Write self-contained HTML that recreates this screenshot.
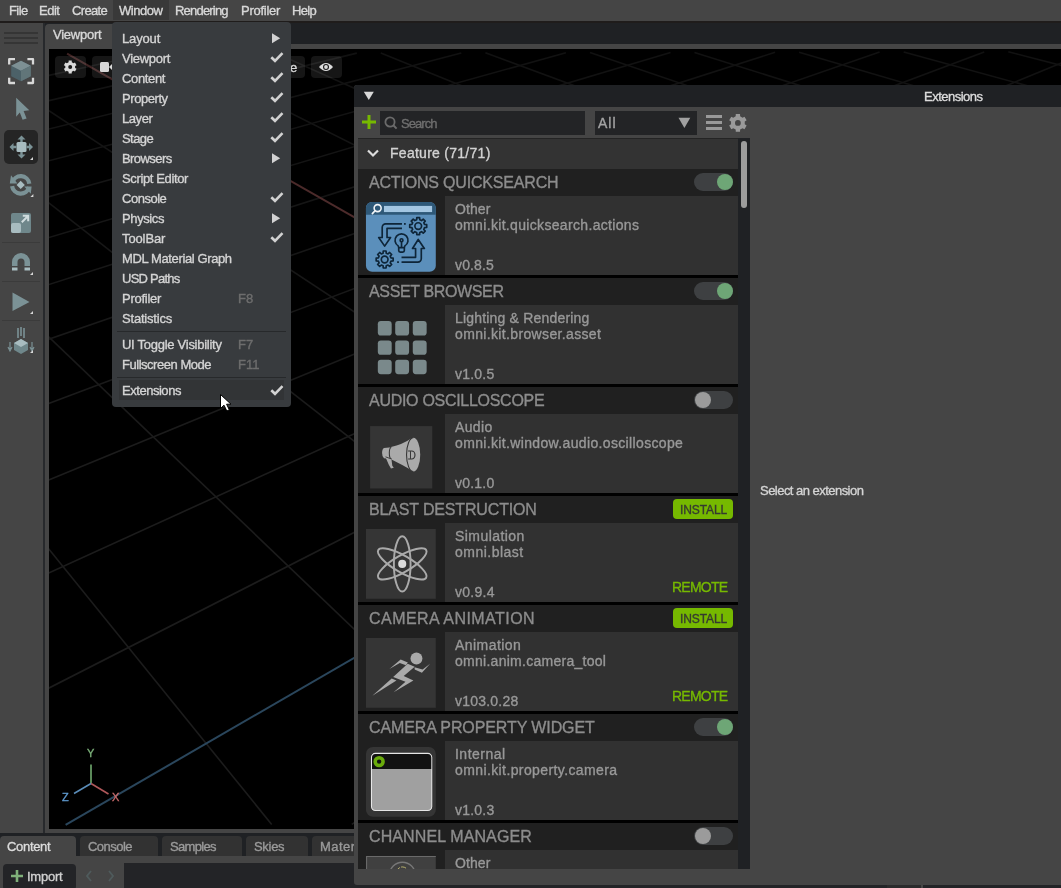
<!DOCTYPE html>
<html><head><meta charset="utf-8"><style>
*{box-sizing:border-box;margin:0;padding:0}
html,body{width:1061px;height:888px;overflow:hidden;background:#454545;font-family:"Liberation Sans",sans-serif;position:relative}
.a{position:absolute}
.t{position:absolute;white-space:pre;line-height:1;will-change:transform;-webkit-text-stroke:0.35px currentColor}
svg{display:block}
</style></head><body>
<div class="a" style="left:0px;top:0px;width:1061px;height:21px;background:#454545;"></div>
<div class="a" style="left:113px;top:0px;width:56px;height:20px;background:#393939;"></div>
<div class="a" style="left:0px;top:21px;width:1061px;height:2px;background:#1f1c1b;"></div>
<div class="t" style="left:8.5px;top:4.00px;font-size:13px;color:#d8d8d8;letter-spacing:-0.584px;">File</div>
<div class="t" style="left:39px;top:4.00px;font-size:13px;color:#d8d8d8;letter-spacing:-0.502px;">Edit</div>
<div class="t" style="left:72px;top:4.00px;font-size:13px;color:#d8d8d8;letter-spacing:-0.666px;">Create</div>
<div class="t" style="left:119px;top:4.00px;font-size:13px;color:#d8d8d8;letter-spacing:-0.490px;">Window</div>
<div class="t" style="left:175px;top:4.00px;font-size:13px;color:#d8d8d8;letter-spacing:-0.800px;">Rendering</div>
<div class="t" style="left:241px;top:4.00px;font-size:13px;color:#d8d8d8;letter-spacing:-0.270px;">Profiler</div>
<div class="t" style="left:292px;top:4.00px;font-size:13px;color:#d8d8d8;letter-spacing:-0.683px;">Help</div>
<div class="a" style="left:0px;top:23px;width:43px;height:810px;background:#454545;"></div>
<div class="a" style="left:43px;top:23px;width:2px;height:813px;background:#27292c;"></div>
<div class="a" style="left:4px;top:32px;width:34px;height:2px;background:#353535;"></div>
<div class="a" style="left:4px;top:37px;width:34px;height:2px;background:#353535;"></div>
<div class="a" style="left:4px;top:42px;width:34px;height:2px;background:#353535;"></div>
<svg class="a" style="left:0;top:50px" width="43" height="40" viewBox="0 50 43 40">
<path d="M9.2 64.5V59.2H15 M27.4 59.2H33V64.5 M33 77.8V83H27.4 M15 83H9.2V77.8" fill="none" stroke="#d8d8d8" stroke-width="2.3" stroke-linejoin="round"/>
<path d="M21 60.8L30.8 65.8V76.2L21 81.3L11.2 76.2V65.8Z" fill="#4c6168"/>
<path d="M21 60.8L30.8 65.8L21 70.8L11.2 65.8Z" fill="#7d9094"/>
<path d="M21 70.8L30.8 65.8V76.2L21 81.3Z" fill="#617579"/>
</svg>
<svg class="a" style="left:0;top:90px" width="43" height="40" viewBox="0 90 43 40">
<path d="M16.2 97.7L29.3 110.3L23.6 111L26.6 118.6L22.6 119.8L19.8 112.6L16.2 116.8Z" fill="#7b9296"/></svg>
<div class="a" style="left:4px;top:130px;width:34px;height:34px;background:#252525;border-radius:5px"></div>
<svg class="a" style="left:0;top:128px" width="43" height="40" viewBox="0 128 43 40">
<rect x="16.5" y="142" width="10" height="10" rx="1.5" fill="#a8bcc0"/>
<path d="M21.5 135.5L25.5 139.5H17.5Z M21.5 158.5L25.5 154.5H17.5Z M9.5 147L13.5 143V151Z M33 147L29 143V151Z" fill="#7b9296"/>
<path d="M20.3 139H22.7V142H20.3Z M20.3 152H22.7V155H20.3Z M13 145.8H16.5V148.2H13Z M26.5 145.8H29.5V148.2H26.5Z" fill="#7b9296"/>
<path d="M33 157L33 160L30 160Z" fill="#d8d8d8"/></svg>
<svg class="a" style="left:0;top:168px" width="43" height="34" viewBox="0 168 43 34">
<path d="M29.32 183.69A8.7 8.7 0 0 0 12.30 182.65" fill="none" stroke="#7b9296" stroke-width="4.2"/>
<path d="M12.09 186.11A8.7 8.7 0 0 0 29.1 187.15" fill="none" stroke="#7b9296" stroke-width="4.2"/>
<path d="M9.8 183.4H17.4L11 175.2Z M24.2 186.4H31.6L30.8 193.8Z" fill="#7b9296"/>
<path d="M20.7 180.8L24.8 184.9L20.7 189L16.6 184.9Z" fill="#a8bcc0"/>
<path d="M33.4 194L33.4 197L30.4 197Z" fill="#d8d8d8"/></svg>
<svg class="a" style="left:0;top:208px" width="43" height="30" viewBox="0 208 43 30">
<rect x="11" y="213" width="20" height="20" rx="2" fill="#6f878b"/>
<rect x="11" y="223" width="10" height="10" rx="2" fill="#a8bcc0"/>
<path d="M21.8 222.2L28 216 M22.8 215.8H28.2V221.2" fill="none" stroke="#d0dcde" stroke-width="2"/></svg>
<div class="a" style="left:2px;top:242px;width:38px;height:1px;background:#3b3b3b;"></div>
<div class="a" style="left:2px;top:281px;width:38px;height:1px;background:#3b3b3b;"></div>
<div class="a" style="left:2px;top:320px;width:38px;height:1px;background:#3b3b3b;"></div>
<svg class="a" style="left:0;top:248px" width="43" height="30" viewBox="0 248 43 30">
<path d="M12 266V262A9 9 0 0 1 30 262V266H24.5V262A3.5 3.5 0 0 0 17.5 262V266Z" fill="#7b9296"/>
<rect x="12" y="267.5" width="5.5" height="3" fill="#a8bcc0"/><rect x="24.5" y="267.5" width="5.5" height="3" fill="#a8bcc0"/>
<path d="M33 272L33 275L30 275Z" fill="#d8d8d8"/></svg>
<svg class="a" style="left:0;top:288px" width="43" height="30" viewBox="0 288 43 30">
<path d="M12.5 292.5L29.5 302L12.5 311Z" fill="#7b9296"/>
<path d="M33 311L33 314L30 314Z" fill="#d8d8d8"/></svg>
<svg class="a" style="left:0;top:325px" width="43" height="32" viewBox="0 325 43 32">
<path d="M18 328V338 M21 327V336 M24 328V338" stroke="#7b9296" stroke-width="1.6"/>
<path d="M21 339L28 343V350L21 354L14 350V343Z" fill="#6f878b"/>
<path d="M21 339L28 343L21 347L14 343Z" fill="#a8bcc0"/>
<path d="M10 342V349 M8 347L10 351L12 347 M32 342V349 M30 347L32 351L34 347" fill="none" stroke="#7b9296" stroke-width="1.2"/>
<path d="M33 350L33 353L30 353Z" fill="#d8d8d8"/></svg>
<div class="a" style="left:45px;top:23px;width:1016px;height:21px;background:#1f2124;"></div>
<div class="a" style="left:45px;top:24px;width:235px;height:21px;background:#454545;border-radius:4px 4px 0 0"></div>
<div class="t" style="left:53px;top:27.90px;font-size:13px;color:#d8d8d8;letter-spacing:-0.249px;">Viewport</div>
<div class="a" style="left:45px;top:44px;width:1016px;height:789px;background:#454545;"></div>
<div class="a" style="left:49px;top:49px;width:1012px;height:780px;background:#000;"></div>
<svg class="a" style="left:49px;top:49px" width="1012" height="780" viewBox="49 49 1012 780">
<defs><linearGradient id="gf" x1="0" y1="49" x2="0" y2="450" gradientUnits="userSpaceOnUse"><stop offset="0" stop-color="#fff" stop-opacity="0.62"/><stop offset="1" stop-color="#fff" stop-opacity="1"/></linearGradient>
<mask id="gm" maskUnits="userSpaceOnUse" x="49" y="49" width="1012" height="780"><rect x="49" y="49" width="1012" height="780" fill="url(#gf)"/></mask></defs>
<g mask="url(#gm)"><g stroke="#1c1c1c" stroke-width="1.6"><line x1="8650.4" y1="808.5" x2="4539.9" y2="45.1"/><line x1="8364.3" y1="809.1" x2="4435.3" y2="45.3"/><line x1="8078.1" y1="809.6" x2="4330.7" y2="45.5"/><line x1="7791.9" y1="810.2" x2="4226.1" y2="45.7"/><line x1="7505.8" y1="810.7" x2="4121.5" y2="45.9"/><line x1="7219.6" y1="811.2" x2="4017.0" y2="46.1"/><line x1="6933.5" y1="811.8" x2="3912.4" y2="46.3"/><line x1="6647.3" y1="812.3" x2="3807.8" y2="46.5"/><line x1="6361.1" y1="812.9" x2="3703.2" y2="46.7"/><line x1="6075.0" y1="813.4" x2="3598.7" y2="46.9"/><line x1="5788.8" y1="814.0" x2="3494.1" y2="47.1"/><line x1="5502.7" y1="814.5" x2="3389.5" y2="47.3"/><line x1="5216.5" y1="815.1" x2="3284.9" y2="47.5"/><line x1="4930.3" y1="815.6" x2="3180.3" y2="47.7"/><line x1="4644.2" y1="816.2" x2="3075.8" y2="47.9"/><line x1="4358.0" y1="816.7" x2="2971.2" y2="48.1"/><line x1="4071.9" y1="817.2" x2="2866.6" y2="48.3"/><line x1="3785.7" y1="817.8" x2="2762.0" y2="48.5"/><line x1="3499.5" y1="818.3" x2="2657.5" y2="48.7"/><line x1="3213.4" y1="818.9" x2="2552.9" y2="48.9"/><line x1="2927.2" y1="819.4" x2="2448.3" y2="49.1"/><line x1="2641.1" y1="820.0" x2="2343.7" y2="49.3"/><line x1="2354.9" y1="820.5" x2="2239.1" y2="49.5"/><line x1="2068.7" y1="821.1" x2="2134.6" y2="49.7"/><line x1="1782.6" y1="821.6" x2="2030.0" y2="49.9"/><line x1="1496.4" y1="822.2" x2="1925.4" y2="50.1"/><line x1="1210.3" y1="822.7" x2="1820.8" y2="50.3"/><line x1="924.1" y1="823.3" x2="1716.3" y2="50.5"/><line x1="637.9" y1="823.8" x2="1611.7" y2="50.7"/><line x1="351.8" y1="824.3" x2="1507.1" y2="50.9"/><line x1="-220.5" y1="825.4" x2="1298.0" y2="51.3"/><line x1="-506.7" y1="826.0" x2="1193.4" y2="51.5"/><line x1="-792.9" y1="826.5" x2="1088.8" y2="51.7"/><line x1="-1079.0" y1="827.1" x2="984.2" y2="51.9"/><line x1="-1365.2" y1="827.6" x2="879.6" y2="52.1"/><line x1="-1651.3" y1="828.2" x2="775.1" y2="52.3"/><line x1="-1937.5" y1="828.7" x2="670.5" y2="52.5"/><line x1="-2223.7" y1="829.3" x2="565.9" y2="52.7"/><line x1="-2509.8" y1="829.8" x2="461.3" y2="52.9"/><line x1="-2796.0" y1="830.4" x2="356.8" y2="53.1"/><line x1="-3082.1" y1="830.9" x2="252.2" y2="53.3"/><line x1="-3368.3" y1="831.4" x2="147.6" y2="53.5"/><line x1="-3654.5" y1="832.0" x2="43.0" y2="53.7"/><line x1="-3940.6" y1="832.5" x2="-61.6" y2="53.9"/><line x1="-4226.8" y1="833.1" x2="-166.1" y2="54.1"/><line x1="-4512.9" y1="833.6" x2="-270.7" y2="54.3"/><line x1="-4799.1" y1="834.2" x2="-375.3" y2="54.5"/><line x1="-5085.3" y1="834.7" x2="-479.9" y2="54.7"/><line x1="-5371.4" y1="835.3" x2="-584.4" y2="54.9"/><line x1="-5657.6" y1="835.8" x2="-689.0" y2="55.1"/><line x1="-5943.7" y1="836.4" x2="-793.6" y2="55.3"/><line x1="-6229.9" y1="836.9" x2="-898.2" y2="55.5"/><line x1="-6516.1" y1="837.5" x2="-1002.8" y2="55.7"/><line x1="-6802.2" y1="838.0" x2="-1107.3" y2="55.9"/><line x1="-7088.4" y1="838.5" x2="-1211.9" y2="56.1"/><line x1="-7374.5" y1="839.1" x2="-1316.5" y2="56.3"/><line x1="-7660.7" y1="839.6" x2="-1421.1" y2="56.5"/><line x1="-7946.9" y1="840.2" x2="-1525.6" y2="56.7"/><line x1="-8233.0" y1="840.7" x2="-1630.2" y2="56.9"/><line x1="-8519.2" y1="841.3" x2="-1734.8" y2="57.1"/><line x1="-7168.5" y1="838.7" x2="-3070.3" y2="59.6"/><line x1="-6882.3" y1="838.2" x2="-2965.7" y2="59.4"/><line x1="-6596.2" y1="837.6" x2="-2861.1" y2="59.2"/><line x1="-6310.0" y1="837.1" x2="-2756.5" y2="59.0"/><line x1="-6023.9" y1="836.5" x2="-2651.9" y2="58.8"/><line x1="-5737.7" y1="836.0" x2="-2547.4" y2="58.6"/><line x1="-5451.5" y1="835.4" x2="-2442.8" y2="58.4"/><line x1="-5165.4" y1="834.9" x2="-2338.2" y2="58.2"/><line x1="-4879.2" y1="834.3" x2="-2233.6" y2="58.0"/><line x1="-4593.1" y1="833.8" x2="-2129.1" y2="57.8"/><line x1="-4306.9" y1="833.2" x2="-2024.5" y2="57.6"/><line x1="-4020.7" y1="832.7" x2="-1919.9" y2="57.4"/><line x1="-3734.6" y1="832.1" x2="-1815.3" y2="57.2"/><line x1="-3448.4" y1="831.6" x2="-1710.7" y2="57.0"/><line x1="-3162.3" y1="831.1" x2="-1606.2" y2="56.8"/><line x1="-2876.1" y1="830.5" x2="-1501.6" y2="56.6"/><line x1="-2589.9" y1="830.0" x2="-1397.0" y2="56.4"/><line x1="-2303.8" y1="829.4" x2="-1292.4" y2="56.2"/><line x1="-2017.6" y1="828.9" x2="-1187.9" y2="56.0"/><line x1="-1731.5" y1="828.3" x2="-1083.3" y2="55.8"/><line x1="-1445.3" y1="827.8" x2="-978.7" y2="55.6"/><line x1="-1159.1" y1="827.2" x2="-874.1" y2="55.4"/><line x1="-873.0" y1="826.7" x2="-769.5" y2="55.2"/><line x1="-586.8" y1="826.1" x2="-665.0" y2="55.0"/><line x1="-300.7" y1="825.6" x2="-560.4" y2="54.8"/><line x1="-14.5" y1="825.0" x2="-455.8" y2="54.6"/><line x1="271.7" y1="824.5" x2="-351.2" y2="54.4"/><line x1="557.8" y1="824.0" x2="-246.7" y2="54.2"/><line x1="844.0" y1="823.4" x2="-142.1" y2="54.0"/><line x1="1130.1" y1="822.9" x2="-37.5" y2="53.8"/><line x1="1702.4" y1="821.8" x2="171.7" y2="53.4"/><line x1="1988.6" y1="821.2" x2="276.2" y2="53.2"/><line x1="2274.8" y1="820.7" x2="380.8" y2="53.0"/><line x1="2560.9" y1="820.1" x2="485.4" y2="52.8"/><line x1="2847.1" y1="819.6" x2="590.0" y2="52.6"/><line x1="3133.2" y1="819.0" x2="694.5" y2="52.4"/><line x1="3419.4" y1="818.5" x2="799.1" y2="52.2"/><line x1="3705.6" y1="817.9" x2="903.7" y2="52.0"/><line x1="3991.7" y1="817.4" x2="1008.3" y2="51.8"/><line x1="4277.9" y1="816.9" x2="1112.8" y2="51.6"/><line x1="4564.0" y1="816.3" x2="1217.4" y2="51.4"/><line x1="4850.2" y1="815.8" x2="1322.0" y2="51.2"/><line x1="5136.4" y1="815.2" x2="1426.6" y2="51.0"/><line x1="5422.5" y1="814.7" x2="1531.2" y2="50.8"/><line x1="5708.7" y1="814.1" x2="1635.7" y2="50.6"/><line x1="5994.8" y1="813.6" x2="1740.3" y2="50.4"/><line x1="6281.0" y1="813.0" x2="1844.9" y2="50.2"/><line x1="6567.2" y1="812.5" x2="1949.5" y2="50.0"/><line x1="6853.3" y1="811.9" x2="2054.0" y2="49.8"/><line x1="7139.5" y1="811.4" x2="2158.6" y2="49.6"/><line x1="7425.6" y1="810.8" x2="2263.2" y2="49.4"/><line x1="7711.8" y1="810.3" x2="2367.8" y2="49.2"/><line x1="7998.0" y1="809.8" x2="2472.4" y2="49.0"/><line x1="8284.1" y1="809.2" x2="2576.9" y2="48.9"/><line x1="8570.3" y1="808.7" x2="2681.5" y2="48.7"/><line x1="8856.4" y1="808.1" x2="2786.1" y2="48.5"/><line x1="9142.6" y1="807.6" x2="2890.7" y2="48.3"/><line x1="9428.8" y1="807.0" x2="2995.2" y2="48.1"/><line x1="9714.9" y1="806.5" x2="3099.8" y2="47.9"/><line x1="10001.1" y1="805.9" x2="3204.4" y2="47.7"/></g><line x1="65.6" y1="824.9" x2="1402.5" y2="51.1" stroke="#2a465c" stroke-width="2"/><line x1="1416.3" y1="822.3" x2="67.1" y2="53.6" stroke="#643838" stroke-width="2"/></g></svg>
<div class="a" style="left:55px;top:56px;width:31px;height:22px;background:rgba(255,255,255,0.085);border-radius:4px"></div>
<svg class="a" style="left:60px;top:57px" width="20" height="20" viewBox="60 57 20 20"><path d="M68.61 62.26 L68.66 60.58 L71.74 60.58 L71.79 62.26 L73.51 63.25 L74.99 62.46 L76.53 65.13 L75.10 66.01 L75.10 67.99 L76.53 68.87 L74.99 71.54 L73.51 70.75 L71.79 71.74 L71.74 73.42 L68.66 73.42 L68.61 71.74 L66.89 70.75 L65.41 71.54 L63.87 68.87 L65.30 67.99 L65.30 66.01 L63.87 65.13 L65.41 62.46 L66.89 63.25Z" fill="#dadada"/><circle cx="70.2" cy="67" r="2" fill="#1a1a1a"/></svg>
<div class="a" style="left:92px;top:56px;width:60px;height:22px;background:rgba(255,255,255,0.085);border-radius:4px"></div>
<svg class="a" style="left:100px;top:61px" width="14" height="12"><rect x="0" y="1" width="9" height="10" rx="1.5" fill="#d8d8d8"/><path d="M9 6L13 2V10Z" fill="#d8d8d8"/></svg>
<div class="a" style="left:230px;top:56px;width:75px;height:22px;background:rgba(255,255,255,0.085);border-radius:4px"></div>
<div class="t" style="left:290px;top:61.00px;font-size:13px;color:#d8d8d8;">e</div>
<div class="a" style="left:311px;top:56px;width:31px;height:22px;background:rgba(255,255,255,0.085);border-radius:4px"></div>
<svg class="a" style="left:318px;top:61px" width="16" height="12" viewBox="0 0 16 12">
<path d="M1 6Q8 -2 15 6Q8 14 1 6Z" fill="#dcdcdc"/><circle cx="8" cy="6" r="3" fill="#1a1a1a"/><circle cx="8" cy="6" r="1.9" fill="#dcdcdc"/></svg>
<svg class="a" style="left:55px;top:745px" width="70" height="60" viewBox="55 745 70 60">
<path d="M91 783.5V764.5" stroke="#72ac70" stroke-width="1.6"/>
<path d="M91 783.5L108.5 794" stroke="#b0585a" stroke-width="1.6"/>
<path d="M91 783.5L74 793.5" stroke="#5a8cb8" stroke-width="1.6"/>
</svg>
<div class="t" style="left:86.6px;top:748.49px;font-size:11px;color:#7aae78;">Y</div>
<div class="t" style="left:111.8px;top:792.49px;font-size:11px;color:#c86a6a;">X</div>
<div class="t" style="left:61.8px;top:792.49px;font-size:11px;color:#5f9ad0;">Z</div>
<div class="a" style="left:0px;top:833px;width:1061px;height:23px;background:#1f2124;"></div>
<div class="a" style="left:0px;top:836px;width:76px;height:20px;background:#454545;border-radius:4px 4px 0 0"></div>
<div class="t" style="left:7px;top:839.70px;font-size:13px;color:#dcdcdc;letter-spacing:-0.324px;">Content</div>
<div class="a" style="left:80px;top:836px;width:78px;height:20px;background:#323232;border-radius:4px 4px 0 0"></div>
<div class="t" style="left:88px;top:839.70px;font-size:13px;color:#9a9a9a;letter-spacing:-0.517px;">Console</div>
<div class="a" style="left:162px;top:836px;width:80px;height:20px;background:#323232;border-radius:4px 4px 0 0"></div>
<div class="t" style="left:170px;top:839.70px;font-size:13px;color:#9a9a9a;letter-spacing:-0.663px;">Samples</div>
<div class="a" style="left:246px;top:836px;width:62px;height:20px;background:#323232;border-radius:4px 4px 0 0"></div>
<div class="t" style="left:254px;top:839.70px;font-size:13px;color:#9a9a9a;letter-spacing:-0.299px;">Skies</div>
<div class="a" style="left:312px;top:836px;width:80px;height:20px;background:#323232;border-radius:4px 4px 0 0"></div>
<div class="t" style="left:320px;top:839.70px;font-size:13px;color:#9a9a9a;letter-spacing:0.481px;">Materials</div>
<div class="a" style="left:0px;top:856px;width:1061px;height:32px;background:#454545;"></div>
<div class="a" style="left:3px;top:864px;width:73px;height:26px;background:#232427;border-radius:4px"></div>
<svg class="a" style="left:10px;top:869px" width="14" height="14"><path d="M7 1V13M1 7H13" stroke="#7fb07a" stroke-width="2.6"/></svg>
<div class="t" style="left:27px;top:870.00px;font-size:13px;color:#d0d0d0;letter-spacing:-0.249px;">Import</div>
<svg class="a" style="left:84px;top:869px" width="40" height="14"><path d="M7 2L3 7L7 12 M25 2L29 7L25 12" fill="none" stroke="#4f5b5c" stroke-width="1.8"/></svg>
<div class="a" style="left:124px;top:863px;width:937px;height:26px;background:#232427;"></div>
<div class="a" style="left:887px;top:885px;width:34px;height:3px;background:#2b2b2c;"></div>
<div class="a" style="left:921px;top:885px;width:2px;height:3px;background:#474747;"></div>
<div class="a" style="left:354px;top:85px;width:707px;height:800px;background:#454545;border-radius:3px 0 0 3px"></div>
<div class="a" style="left:354px;top:85px;width:707px;height:22px;background:#1f2124;border-radius:3px 0 0 0"></div>
<svg class="a" style="left:363px;top:91px" width="12" height="10"><path d="M0.8 0.8H10.8L5.8 9Z" fill="#d8d8d8"/></svg>
<div class="t" style="left:924.3px;top:89.80px;font-size:13px;color:#dcdcdc;letter-spacing:-0.510px;">Extensions</div>
<svg class="a" style="left:361px;top:114px" width="16" height="16"><path d="M8 1V15M1 8H15" stroke="#76b900" stroke-width="3"/></svg>
<div class="a" style="left:380px;top:111px;width:205px;height:24px;background:#232426;"></div>
<svg class="a" style="left:383px;top:115px" width="16" height="16"><circle cx="7" cy="7" r="4.6" fill="none" stroke="#6a6a6a" stroke-width="1.8"/><path d="M10.3 10.3L13.6 13.6" stroke="#6a6a6a" stroke-width="2"/></svg>
<div class="t" style="left:401.4px;top:116.90px;font-size:13px;color:#6f6f6f;letter-spacing:-0.941px;">Search</div>
<div class="a" style="left:595px;top:111px;width:102px;height:24px;background:#232426;"></div>
<div class="t" style="left:598px;top:116.15px;font-size:14px;color:#a4a4a4;letter-spacing:1.019px;">All</div>
<svg class="a" style="left:678px;top:117px" width="13" height="12"><path d="M0.5 0.8H12.3L6.4 11Z" fill="#a0a0a0"/></svg>
<svg class="a" style="left:705px;top:114px" width="18" height="18"><path d="M1 2.5H17M1 8.5H17M1 14.5H17" stroke="#9a9a9a" stroke-width="3"/></svg>
<svg class="a" style="left:727px;top:112px" width="22" height="22" viewBox="727 112 22 22"><path d="M735.67 116.27 L735.78 114.05 L740.02 114.05 L740.13 116.27 L742.53 117.65 L744.50 116.64 L746.63 120.32 L744.76 121.52 L744.76 124.28 L746.63 125.48 L744.50 129.16 L742.53 128.15 L740.13 129.53 L740.02 131.75 L735.78 131.75 L735.67 129.53 L733.27 128.15 L731.30 129.16 L729.17 125.48 L731.04 124.28 L731.04 121.52 L729.17 120.32 L731.30 116.64 L733.27 117.65Z" fill="#9a9a9a"/><circle cx="737.9" cy="122.9" r="2.9" fill="#454545"/></svg>
<div class="a" style="left:358px;top:138px;width:392px;height:731px;background:#1f2124;"></div>
<div class="a" style="left:358px;top:138px;width:380px;height:31px;background:#333333;"></div>
<div class="a" style="left:358px;top:138px;width:380px;height:1px;background:#242424;"></div>
<svg class="a" style="left:366px;top:148px" width="14" height="11"><path d="M2 2.5L7 7.5L12 2.5" fill="none" stroke="#dcdcdc" stroke-width="2.2"/></svg>
<div class="t" style="left:389.6px;top:145.95px;font-size:14px;color:#d2d2d2;letter-spacing:0.271px;">Feature (71/71)</div>
<div class="a" style="left:741px;top:141px;width:6px;height:67px;background:#9c9c9c;border-radius:3px"></div>
<div class="t" style="left:760.1px;top:484.00px;font-size:13px;color:#d4d4d4;letter-spacing:-0.532px;">Select an extension</div>
<div class="a" style="left:0;top:0;width:1061px;height:869px;overflow:hidden">
<div class="a" style="left:358px;top:169px;width:380px;height:27px;background:#202020;"></div>
<div class="a" style="left:358px;top:196px;width:87px;height:79px;background:#202020;"></div>
<div class="a" style="left:445px;top:196px;width:293px;height:79px;background:#313131;"></div>
<div class="a" style="left:358px;top:275px;width:380px;height:3px;background:#000;"></div>
<svg class="a" style="left:362px;top:198px" width="78" height="78" viewBox="0 0 888 888"><rect x="45" y="45" width="795" height="795" rx="70" fill="#5b8fbb"/>
<path d="M45 190V115A70 70 0 0 1 115 45H770A70 70 0 0 1 840 115V190Z" fill="#2e5878"/>
<rect x="250" y="90" width="548" height="70" fill="#a3c6e2"/>
<circle cx="178" cy="115" r="40" fill="none" stroke="#f0f4f8" stroke-width="18"/>
<path d="M148 145L118 178" stroke="#f0f4f8" stroke-width="20" stroke-linecap="round"/>
<g fill="none" stroke="#0e2538" stroke-width="19" stroke-linejoin="round">
<path d="M455 295H270A40 40 0 0 0 230 335V450H190L258 548L325 450H285V345H455"/>
<path d="M450 675H610V575H575L640 472L710 575H675V690A40 40 0 0 1 635 730H450"/>
<path d="M412 545A74 74 0 1 1 488 545L482 565H418Z"/>
<path d="M418 565V598A18 18 0 0 0 436 616H464A18 18 0 0 0 482 598V565"/>
<circle cx="450" cy="480" r="16"/>
<path d="M450 496V565"/>
<path d="M711.82 302.16 L736.67 303.91 L736.67 336.09 L711.82 337.84 L703.40 358.17 L719.73 376.98 L696.98 399.73 L678.17 383.40 L657.84 391.82 L656.09 416.67 L623.91 416.67 L622.16 391.82 L601.83 383.40 L583.02 399.73 L560.27 376.98 L576.60 358.17 L568.18 337.84 L543.33 336.09 L543.33 303.91 L568.18 302.16 L576.60 281.83 L560.27 263.02 L583.02 240.27 L601.83 256.60 L622.16 248.18 L623.91 223.33 L656.09 223.33 L657.84 248.18 L678.17 256.60 L696.98 240.27 L719.73 263.02 L703.40 281.83Z"/><circle cx="640" cy="320" r="38"/>
<path d="M329.82 682.16 L354.67 683.91 L354.67 716.09 L329.82 717.84 L321.40 738.17 L337.73 756.98 L314.98 779.73 L296.17 763.40 L275.84 771.82 L274.09 796.67 L241.91 796.67 L240.16 771.82 L219.83 763.40 L201.02 779.73 L178.27 756.98 L194.60 738.17 L186.18 717.84 L161.33 716.09 L161.33 683.91 L186.18 682.16 L194.60 661.83 L178.27 643.02 L201.02 620.27 L219.83 636.60 L240.16 628.18 L241.91 603.33 L274.09 603.33 L275.84 628.18 L296.17 636.60 L314.98 620.27 L337.73 643.02 L321.40 661.83Z"/><circle cx="258" cy="700" r="38"/>
</g>
<g fill="#0e2538"><rect x="478" y="285" width="20" height="20"/><rect x="400" y="720" width="20" height="20"/></g></svg>
<div class="t" style="left:368.6px;top:174.96px;font-size:16px;color:#8c8c8c;letter-spacing:-0.185px;">ACTIONS QUICKSEARCH</div>
<div class="t" style="left:455.4px;top:202.05px;font-size:14px;color:#989898;letter-spacing:0.096px;">Other</div>
<div class="t" style="left:455.4px;top:218.05px;font-size:14px;color:#989898;letter-spacing:0.330px;">omni.kit.quicksearch.actions</div>
<div class="t" style="left:455.4px;top:257.65px;font-size:14px;color:#989898;letter-spacing:0.132px;">v0.8.5</div>
<div class="a" style="left:694px;top:173px;width:39px;height:18px;border-radius:9px;background:#3e4042"><div class="a" style="top:1px;left:22.5px;background:#6ea676;width:16px;height:16px;border-radius:8px"></div></div>
<div class="a" style="left:358px;top:278px;width:380px;height:27px;background:#202020;"></div>
<div class="a" style="left:358px;top:305px;width:87px;height:79px;background:#202020;"></div>
<div class="a" style="left:445px;top:305px;width:293px;height:79px;background:#313131;"></div>
<div class="a" style="left:358px;top:384px;width:380px;height:3px;background:#000;"></div>
<svg class="a" style="left:362px;top:307px" width="78" height="78" viewBox="0 0 888 888"><rect x="180" y="160" width="158" height="165" rx="35" fill="#7a898b"/><rect x="180" y="380" width="158" height="165" rx="35" fill="#7a898b"/><rect x="180" y="600" width="158" height="165" rx="35" fill="#7a898b"/><rect x="378" y="160" width="158" height="165" rx="35" fill="#7a898b"/><rect x="378" y="380" width="158" height="165" rx="35" fill="#7a898b"/><rect x="378" y="600" width="158" height="165" rx="35" fill="#7a898b"/><rect x="578" y="160" width="158" height="165" rx="35" fill="#7a898b"/><rect x="578" y="380" width="158" height="165" rx="35" fill="#7a898b"/><rect x="578" y="600" width="158" height="165" rx="35" fill="#7a898b"/></svg>
<div class="t" style="left:368.6px;top:283.96px;font-size:16px;color:#8c8c8c;letter-spacing:-0.358px;">ASSET BROWSER</div>
<div class="t" style="left:455.4px;top:311.05px;font-size:14px;color:#989898;letter-spacing:0.186px;">Lighting &amp; Rendering</div>
<div class="t" style="left:455.4px;top:327.05px;font-size:14px;color:#989898;letter-spacing:0.352px;">omni.kit.browser.asset</div>
<div class="t" style="left:455.4px;top:366.65px;font-size:14px;color:#989898;letter-spacing:0.212px;">v1.0.5</div>
<div class="a" style="left:694px;top:282px;width:39px;height:18px;border-radius:9px;background:#3e4042"><div class="a" style="top:1px;left:22.5px;background:#6ea676;width:16px;height:16px;border-radius:8px"></div></div>
<div class="a" style="left:358px;top:387px;width:380px;height:27px;background:#202020;"></div>
<div class="a" style="left:358px;top:414px;width:87px;height:79px;background:#202020;"></div>
<div class="a" style="left:445px;top:414px;width:293px;height:79px;background:#313131;"></div>
<div class="a" style="left:358px;top:493px;width:380px;height:3px;background:#000;"></div>
<svg class="a" style="left:362px;top:416px" width="78" height="78" viewBox="0 0 888 888"><rect x="92" y="115" width="708" height="710" fill="#353535"/>
<path d="M330 352Q460 325 568 250L590 632Q460 555 330 492Z" fill="#aaa"/>
<ellipse cx="585" cy="440" rx="78" ry="192" fill="#aaa"/>
<path d="M585 248A78 192 0 0 0 585 632" fill="none" stroke="#333" stroke-width="12"/>
<path d="M340 355L250 365A30 60 0 0 0 250 480L340 490Z" fill="#aaa"/>
<path d="M333 355A25 68 0 0 0 333 490" fill="none" stroke="#333" stroke-width="12"/>
<path d="M268 470L335 490L345 565L362 590L330 598L305 555Z" fill="#aaa"/>
<path d="M268 465L338 490" stroke="#333" stroke-width="10"/>
<path d="M525 398H565A38 46 0 0 1 565 490H525" fill="none" stroke="#333" stroke-width="13"/><path d="M552 400V488" stroke="#333" stroke-width="11"/></svg>
<div class="t" style="left:368.6px;top:392.96px;font-size:16px;color:#8c8c8c;letter-spacing:-0.288px;">AUDIO OSCILLOSCOPE</div>
<div class="t" style="left:455.4px;top:420.05px;font-size:14px;color:#989898;letter-spacing:0.372px;">Audio</div>
<div class="t" style="left:455.4px;top:436.05px;font-size:14px;color:#989898;letter-spacing:0.350px;">omni.kit.window.audio.oscilloscope</div>
<div class="t" style="left:455.4px;top:475.65px;font-size:14px;color:#989898;letter-spacing:0.212px;">v0.1.0</div>
<div class="a" style="left:694px;top:391px;width:39px;height:18px;border-radius:9px;background:#3e4042"><div class="a" style="top:1px;left:0.5px;background:#9b9b9b;width:16px;height:16px;border-radius:8px"></div></div>
<div class="a" style="left:358px;top:496px;width:380px;height:27px;background:#202020;"></div>
<div class="a" style="left:358px;top:523px;width:87px;height:79px;background:#202020;"></div>
<div class="a" style="left:445px;top:523px;width:293px;height:79px;background:#313131;"></div>
<div class="a" style="left:358px;top:602px;width:380px;height:3px;background:#000;"></div>
<svg class="a" style="left:362px;top:525px" width="78" height="78" viewBox="0 0 888 888"><rect x="45" y="45" width="795" height="795" fill="#353535"/>
<g fill="none" stroke="#aaa" stroke-width="22">
<ellipse cx="458" cy="443" rx="95" ry="315"/>
<ellipse cx="458" cy="443" rx="95" ry="315" transform="rotate(60 458 443)"/>
<ellipse cx="458" cy="443" rx="95" ry="315" transform="rotate(-60 458 443)"/>
</g><circle cx="458" cy="443" r="46" fill="#dcdcdc"/></svg>
<div class="t" style="left:368.6px;top:501.96px;font-size:16px;color:#8c8c8c;letter-spacing:-0.157px;">BLAST DESTRUCTION</div>
<div class="t" style="left:455.4px;top:529.05px;font-size:14px;color:#989898;letter-spacing:0.447px;">Simulation</div>
<div class="t" style="left:455.4px;top:545.05px;font-size:14px;color:#989898;letter-spacing:0.487px;">omni.blast</div>
<div class="t" style="left:455.4px;top:584.65px;font-size:14px;color:#989898;letter-spacing:0.272px;">v0.9.4</div>
<div class="a" style="left:673px;top:499px;width:60px;height:20px;background:#76b900;border-radius:4px"></div>
<div class="t" style="left:679.6px;top:503.84px;font-size:12px;color:#363b2f;letter-spacing:-0.099px;">INSTALL</div>
<div class="t" style="left:672.4px;top:580.15px;font-size:14px;color:#76b900;letter-spacing:-0.778px;">REMOTE</div>
<div class="a" style="left:358px;top:605px;width:380px;height:27px;background:#202020;"></div>
<div class="a" style="left:358px;top:632px;width:87px;height:79px;background:#202020;"></div>
<div class="a" style="left:445px;top:632px;width:293px;height:79px;background:#313131;"></div>
<div class="a" style="left:358px;top:711px;width:380px;height:3px;background:#000;"></div>
<svg class="a" style="left:362px;top:634px" width="78" height="78" viewBox="0 0 888 888"><rect x="45" y="45" width="795" height="795" fill="#353535"/>
<circle cx="620" cy="280" r="68" fill="#aaa"/>
<path d="M520 338L600 372L475 478L585 530L360 662L495 545L355 490Z" fill="#aaa"/>
<path d="M118 702L338 508L392 528Z" fill="#aaa"/>
<path d="M312 398L440 290L522 325L500 357L430 330Z" fill="#aaa"/>
<path d="M598 378L690 405L775 338L682 442L600 405Z" fill="#aaa"/></svg>
<div class="t" style="left:368.6px;top:610.96px;font-size:16px;color:#8c8c8c;letter-spacing:0.450px;">CAMERA ANIMATION</div>
<div class="t" style="left:455.4px;top:638.05px;font-size:14px;color:#989898;letter-spacing:0.454px;">Animation</div>
<div class="t" style="left:455.4px;top:654.05px;font-size:14px;color:#989898;letter-spacing:0.269px;">omni.anim.camera_tool</div>
<div class="t" style="left:455.4px;top:693.65px;font-size:14px;color:#989898;letter-spacing:0.213px;">v103.0.28</div>
<div class="a" style="left:673px;top:608px;width:60px;height:20px;background:#76b900;border-radius:4px"></div>
<div class="t" style="left:679.6px;top:612.84px;font-size:12px;color:#363b2f;letter-spacing:-0.099px;">INSTALL</div>
<div class="t" style="left:672.4px;top:689.15px;font-size:14px;color:#76b900;letter-spacing:-0.778px;">REMOTE</div>
<div class="a" style="left:358px;top:714px;width:380px;height:27px;background:#202020;"></div>
<div class="a" style="left:358px;top:741px;width:87px;height:79px;background:#202020;"></div>
<div class="a" style="left:445px;top:741px;width:293px;height:79px;background:#313131;"></div>
<div class="a" style="left:358px;top:820px;width:380px;height:3px;background:#000;"></div>
<svg class="a" style="left:362px;top:743px" width="78" height="78" viewBox="0 0 888 888"><rect x="45" y="45" width="795" height="795" rx="80" fill="#353535"/>
<rect x="108" y="118" width="686" height="650" rx="45" fill="#a0a0a0" stroke="#e6e6e6" stroke-width="12"/>
<path d="M114 295V165A42 42 0 0 1 156 124H746A42 42 0 0 1 788 165V295Z" fill="#121212"/>
<circle cx="195" cy="212" r="45" fill="none" stroke="#6aab0c" stroke-width="40"/></svg>
<div class="t" style="left:368.6px;top:719.96px;font-size:16px;color:#8c8c8c;letter-spacing:-0.100px;">CAMERA PROPERTY WIDGET</div>
<div class="t" style="left:455.4px;top:747.05px;font-size:14px;color:#989898;letter-spacing:0.485px;">Internal</div>
<div class="t" style="left:455.4px;top:763.05px;font-size:14px;color:#989898;letter-spacing:0.395px;">omni.kit.property.camera</div>
<div class="t" style="left:455.4px;top:802.65px;font-size:14px;color:#989898;letter-spacing:0.212px;">v1.0.3</div>
<div class="a" style="left:694px;top:718px;width:39px;height:18px;border-radius:9px;background:#3e4042"><div class="a" style="top:1px;left:22.5px;background:#6ea676;width:16px;height:16px;border-radius:8px"></div></div>
<div class="a" style="left:358px;top:823px;width:380px;height:27px;background:#202020;"></div>
<div class="a" style="left:358px;top:850px;width:87px;height:79px;background:#202020;"></div>
<div class="a" style="left:445px;top:850px;width:293px;height:79px;background:#313131;"></div>
<div class="a" style="left:358px;top:929px;width:380px;height:3px;background:#000;"></div>
<svg class="a" style="left:362px;top:852px" width="78" height="78" viewBox="0 0 888 888"><rect x="45" y="45" width="795" height="795" fill="#404040"/>
<path d="M52 840V52H840" fill="none" stroke="#6a6a6a" stroke-width="12"/>
<circle cx="460" cy="265" r="148" fill="none" stroke="#777" stroke-width="16"/>
<circle cx="460" cy="238" r="68" fill="none" stroke="#c9c176" stroke-width="10" stroke-dasharray="60 14"/></svg>
<div class="t" style="left:368.6px;top:828.96px;font-size:16px;color:#8c8c8c;letter-spacing:0.113px;">CHANNEL MANAGER</div>
<div class="t" style="left:455.4px;top:856.05px;font-size:14px;color:#989898;letter-spacing:0.096px;">Other</div>
<div class="t" style="left:455.4px;top:872.05px;font-size:14px;color:#989898;letter-spacing:1.295px;">omni.kit.channel</div>
<div class="t" style="left:455.4px;top:911.65px;font-size:14px;color:#989898;letter-spacing:0.212px;">v1.0.0</div>
<div class="a" style="left:694px;top:827px;width:39px;height:18px;border-radius:9px;background:#3e4042"><div class="a" style="top:1px;left:0.5px;background:#9b9b9b;width:16px;height:16px;border-radius:8px"></div></div>
</div>
<div class="a" style="left:112px;top:22px;width:179px;height:385px;background:#383b3e;border-radius:4px"></div>
<div class="t" style="left:122.4px;top:32.00px;font-size:13px;color:#d4d4d4;letter-spacing:-0.149px;">Layout</div>
<svg class="a" style="left:271px;top:33px" width="10" height="11"><path d="M1 0.3L9.2 5.3L1 10.3Z" fill="#d2d2d2"/></svg>
<div class="t" style="left:122.4px;top:52.00px;font-size:13px;color:#d4d4d4;letter-spacing:-0.278px;">Viewport</div>
<svg class="a" style="left:270px;top:52px" width="14" height="11"><path d="M1.3 5.2L5 8.8L12.5 1.2" fill="none" stroke="#d2d2d2" stroke-width="2.6"/></svg>
<div class="t" style="left:122.4px;top:72.00px;font-size:13px;color:#d4d4d4;letter-spacing:-0.358px;">Content</div>
<svg class="a" style="left:270px;top:72px" width="14" height="11"><path d="M1.3 5.2L5 8.8L12.5 1.2" fill="none" stroke="#d2d2d2" stroke-width="2.6"/></svg>
<div class="t" style="left:122.4px;top:92.00px;font-size:13px;color:#d4d4d4;letter-spacing:-0.434px;">Property</div>
<svg class="a" style="left:270px;top:92px" width="14" height="11"><path d="M1.3 5.2L5 8.8L12.5 1.2" fill="none" stroke="#d2d2d2" stroke-width="2.6"/></svg>
<div class="t" style="left:122.4px;top:112.00px;font-size:13px;color:#d4d4d4;letter-spacing:-0.433px;">Layer</div>
<svg class="a" style="left:270px;top:112px" width="14" height="11"><path d="M1.3 5.2L5 8.8L12.5 1.2" fill="none" stroke="#d2d2d2" stroke-width="2.6"/></svg>
<div class="t" style="left:122.4px;top:132.00px;font-size:13px;color:#d4d4d4;letter-spacing:-0.571px;">Stage</div>
<svg class="a" style="left:270px;top:132px" width="14" height="11"><path d="M1.3 5.2L5 8.8L12.5 1.2" fill="none" stroke="#d2d2d2" stroke-width="2.6"/></svg>
<div class="t" style="left:122.4px;top:152.00px;font-size:13px;color:#d4d4d4;letter-spacing:-0.570px;">Browsers</div>
<svg class="a" style="left:271px;top:153px" width="10" height="11"><path d="M1 0.3L9.2 5.3L1 10.3Z" fill="#d2d2d2"/></svg>
<div class="t" style="left:122.4px;top:172.00px;font-size:13px;color:#d4d4d4;letter-spacing:-0.368px;">Script Editor</div>
<div class="t" style="left:122.4px;top:192.00px;font-size:13px;color:#d4d4d4;letter-spacing:-0.484px;">Console</div>
<svg class="a" style="left:270px;top:192px" width="14" height="11"><path d="M1.3 5.2L5 8.8L12.5 1.2" fill="none" stroke="#d2d2d2" stroke-width="2.6"/></svg>
<div class="t" style="left:122.4px;top:212.00px;font-size:13px;color:#d4d4d4;letter-spacing:-0.383px;">Physics</div>
<svg class="a" style="left:271px;top:213px" width="10" height="11"><path d="M1 0.3L9.2 5.3L1 10.3Z" fill="#d2d2d2"/></svg>
<div class="t" style="left:122.4px;top:232.00px;font-size:13px;color:#d4d4d4;letter-spacing:-0.113px;">ToolBar</div>
<svg class="a" style="left:270px;top:232px" width="14" height="11"><path d="M1.3 5.2L5 8.8L12.5 1.2" fill="none" stroke="#d2d2d2" stroke-width="2.6"/></svg>
<div class="t" style="left:122.4px;top:252.00px;font-size:13px;color:#d4d4d4;letter-spacing:-0.380px;">MDL Material Graph</div>
<div class="t" style="left:122.4px;top:272.00px;font-size:13px;color:#d4d4d4;letter-spacing:-0.752px;">USD Paths</div>
<div class="t" style="left:122.4px;top:292.00px;font-size:13px;color:#d4d4d4;letter-spacing:-0.255px;">Profiler</div>
<div class="t" style="left:238.4px;top:292.00px;font-size:13px;color:#6e6e6e;">F8</div>
<div class="t" style="left:122.4px;top:312.00px;font-size:13px;color:#d4d4d4;letter-spacing:-0.202px;">Statistics</div>
<div class="a" style="left:117px;top:331px;width:169px;height:1px;background:#27292b;"></div>
<div class="t" style="left:122.4px;top:338.00px;font-size:13px;color:#d4d4d4;letter-spacing:-0.269px;">UI Toggle Visibility</div>
<div class="t" style="left:238.4px;top:338.00px;font-size:13px;color:#6e6e6e;">F7</div>
<div class="t" style="left:122.4px;top:358.00px;font-size:13px;color:#d4d4d4;letter-spacing:-0.472px;">Fullscreen Mode</div>
<div class="t" style="left:238.4px;top:358.00px;font-size:13px;color:#6e6e6e;">F11</div>
<div class="a" style="left:117px;top:377px;width:169px;height:1px;background:#27292b;"></div>
<div class="a" style="left:119px;top:380px;width:165px;height:20px;background:#323436;"></div>
<div class="t" style="left:122.4px;top:383.80px;font-size:13px;color:#d4d4d4;letter-spacing:-0.466px;">Extensions</div>
<svg class="a" style="left:270px;top:384.8px" width="14" height="11"><path d="M1.3 5.2L5 8.8L12.5 1.2" fill="none" stroke="#d2d2d2" stroke-width="2.6"/></svg>
<svg class="a" style="left:219px;top:393px" width="14" height="20"><path d="M1.5 1.5V15.5L5 12.2L7.8 18L10.3 16.8L7.6 11.2H12Z" fill="#fff" stroke="#000" stroke-width="1"/></svg>
</body></html>
